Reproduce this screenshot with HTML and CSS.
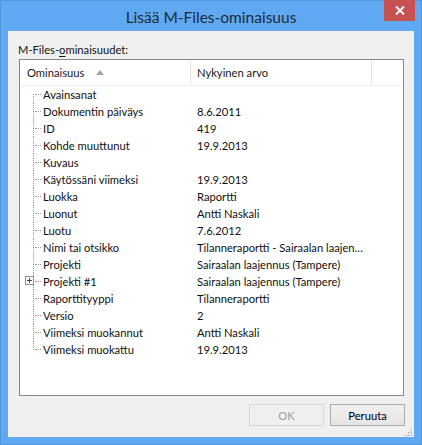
FILE: index.html
```html
<!DOCTYPE html>
<html lang="fi">
<head>
<meta charset="utf-8">
<title>Lisää M-Files-ominaisuus</title>
<link rel="stylesheet" href="styles.css">
</head>
<body>
<div class="window">
  <div class="titlebar">
    <div class="title">Lisää M-Files-ominaisuus</div>
    <button class="close" aria-label="Sulje">
      <svg width="10" height="9" viewBox="0 0 10 9"><path d="M1 0.5 L9 8.5 M9 0.5 L1 8.5" stroke="#fff" stroke-width="2"/></svg>
    </button>
  </div>
  <div class="client">
    <div class="label">M-Files-<u>o</u>minaisuudet:</div>
    <div class="listbox">
      <div class="header">
        <div class="hcol hcol1">Ominaisuus <span class="sort"></span></div>
        <div class="hcol hcol2">Nykyinen arvo</div>
        <div class="hcol hcol3"></div>
      </div>
      <div class="rows">
        <div class="row first"><div class="tree"></div><div class="name">Avainsanat</div><div class="val"></div></div>
        <div class="row"><div class="tree"></div><div class="name">Dokumentin päiväys</div><div class="val">8.6.2011</div></div>
        <div class="row"><div class="tree"></div><div class="name">ID</div><div class="val">419</div></div>
        <div class="row"><div class="tree"></div><div class="name">Kohde muuttunut</div><div class="val">19.9.2013</div></div>
        <div class="row"><div class="tree"></div><div class="name">Kuvaus</div><div class="val"></div></div>
        <div class="row"><div class="tree"></div><div class="name">Käytössäni viimeksi</div><div class="val">19.9.2013</div></div>
        <div class="row"><div class="tree"></div><div class="name">Luokka</div><div class="val">Raportti</div></div>
        <div class="row"><div class="tree"></div><div class="name">Luonut</div><div class="val">Antti Naskali</div></div>
        <div class="row"><div class="tree"></div><div class="name">Luotu</div><div class="val">7.6.2012</div></div>
        <div class="row"><div class="tree"></div><div class="name">Nimi tai otsikko</div><div class="val">Tilanneraportti - Sairaalan laajen…</div></div>
        <div class="row"><div class="tree"></div><div class="name">Projekti</div><div class="val">Sairaalan laajennus (Tampere)</div></div>
        <div class="row"><div class="tree"><span class="expander"><svg width="9" height="9" viewBox="0 0 9 9"><rect x="0.5" y="0.5" width="8" height="8" fill="#fff" stroke="#8e8f8f"/><path d="M2 4.5 H7 M4.5 2 V7" stroke="#3c4a6b"/></svg></span></div><div class="name">Projekti #1</div><div class="val">Sairaalan laajennus (Tampere)</div></div>
        <div class="row"><div class="tree"></div><div class="name">Raporttityyppi</div><div class="val">Tilanneraportti</div></div>
        <div class="row"><div class="tree"></div><div class="name">Versio</div><div class="val">2</div></div>
        <div class="row"><div class="tree"></div><div class="name">Viimeksi muokannut</div><div class="val">Antti Naskali</div></div>
        <div class="row last"><div class="tree"></div><div class="name">Viimeksi muokattu</div><div class="val">19.9.2013</div></div>
      </div>
    </div>
    <div class="buttons">
      <button class="btn disabled" disabled>OK</button>
      <button class="btn">Peruuta</button>
    </div>
    <div class="grip"></div>
  </div>
</div>
</body>
</html>
```

FILE: styles.css
```css
* { box-sizing: border-box; }
html, body { margin: 0; padding: 0; }
body {
  width: 422px;
  height: 445px;
  overflow: hidden;
  font-family: Lato, "Open Sans", sans-serif;
  font-size: 11.2px;
  color: #111;
}
.window {
  width: 422px;
  height: 445px;
  background: #5ea9f1;
  border: 1px solid #4e97dd;
  display: flex;
  flex-direction: column;
}
.titlebar {
  height: 30px;
  position: relative;
  display: flex;
  align-items: center;
  justify-content: center;
}
.title {
  font-size: 15.5px;
  color: #1f2a36;
  padding-top: 1px;
}
.close {
  position: absolute;
  top: -1px;
  right: 6px;
  width: 31px;
  height: 21px;
  border: none;
  padding: 0;
  background: #c75050;
  display: flex;
  align-items: center;
  justify-content: center;
}
.client {
  margin: 0 7px;
  height: 406px;
  background: #f0f0f0;
  padding: 11px 9px 0 10px;
  display: flex;
  flex-direction: column;
  position: relative;
}
.label {
  line-height: 16px;
  height: 17px;
}
.label u { text-decoration-thickness: 1px; text-underline-offset: 2px; }
.listbox {
  margin-left: 1px;
  width: 385px;
  height: 337px;
  border: 1px solid #828790;
  background: #fff;
  display: flex;
  flex-direction: column;
}
.header {
  height: 26px;
  display: flex;
  border-bottom: 1px solid #eef0f4;
}
.hcol {
  display: flex;
  align-items: center;
  color: #1a1a1a;
}
.hcol1 { width: 171px; padding-left: 7px; border-right: 1px solid #e5e5e5; }
.hcol2 { width: 181px; padding-left: 6px; border-right: 1px solid #e5e5e5; }
.hcol3 { flex: 1; }
.sort {
  margin-left: 12px;
  width: 0;
  height: 0;
  border-left: 4.5px solid transparent;
  border-right: 4.5px solid transparent;
  border-bottom: 5px solid #a3a3a3;
  margin-top: -1px;
}
.rows { display: flex; flex-direction: column; }
.row {
  height: 17px;
  line-height: 17px;
  display: flex;
}
.tree { width: 23px; position: relative; flex: none; }
.tree::before {
  content: "";
  position: absolute;
  left: 13px;
  top: 0;
  bottom: 0;
  border-left: 1px dotted #9a9a9a;
}
.first .tree::before { top: 8px; }
.last .tree::before { bottom: 8px; }
.tree::after {
  content: "";
  position: absolute;
  left: 15px;
  top: 8px;
  width: 6px;
  border-top: 1px dotted #9a9a9a;
}
.expander {
  position: absolute;
  left: 5px;
  top: 3px;
  width: 9px;
  height: 9px;
  display: block;
  line-height: 0;
  z-index: 1;
}
.name { width: 154px; white-space: nowrap; }
.val { flex: 1; white-space: nowrap; overflow: hidden; }
.buttons {
  margin-top: 8px;
  display: flex;
  justify-content: flex-end;
  gap: 6px;
}
.btn {
  width: 75px;
  height: 22px;
  font-family: inherit;
  font-size: 11.2px;
  padding: 0;
  border: 1px solid #acacac;
  background: linear-gradient(#f0f0f0, #e5e5e5);
  color: #000;
}
.btn.disabled {
  border-color: #d9d9d9;
  background: #f0f0f0;
  color: #a0a0a0;
}
.grip {
  position: absolute;
  right: 2px;
  bottom: 1px;
  width: 8px;
  height: 8px;
  background:
    radial-gradient(circle, #b6b6b6 0.9px, transparent 1.1px) 0 0 / 3px 3px;
  clip-path: polygon(100% 0, 100% 100%, 0 100%);
}
```
